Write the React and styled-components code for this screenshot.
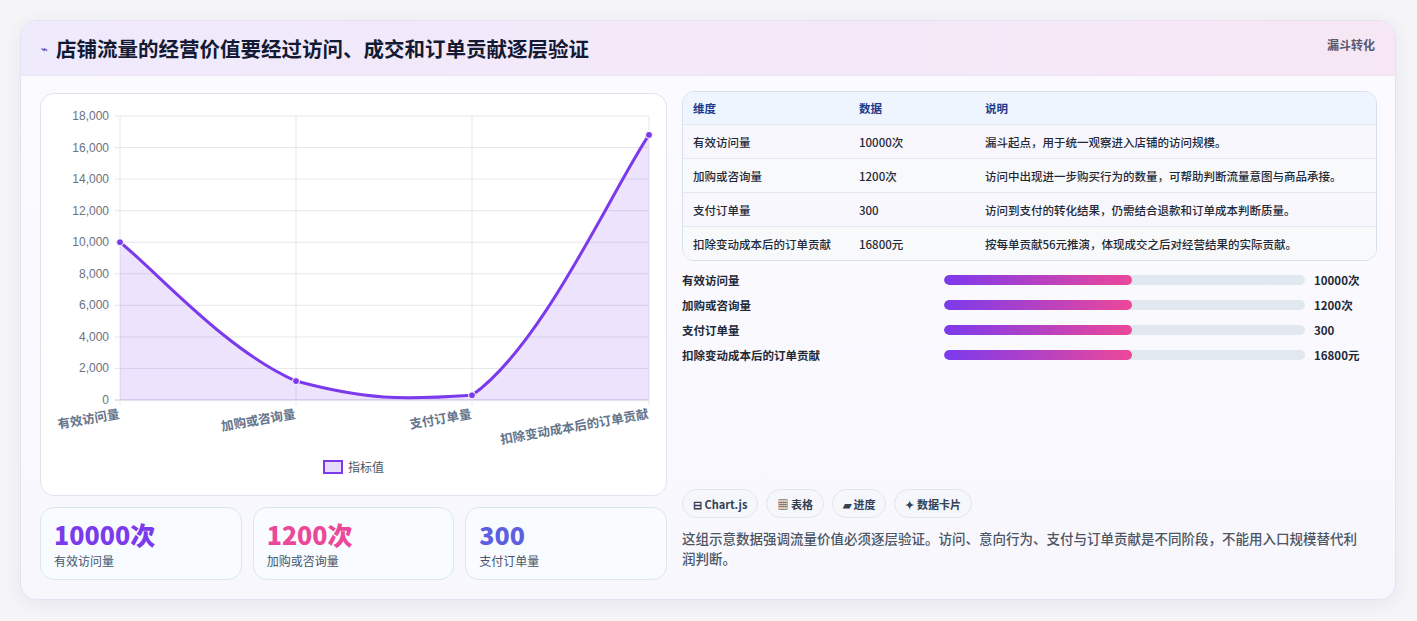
import React from "react";
import styled, { createGlobalStyle } from "styled-components";

const Global = createGlobalStyle`
  body { margin: 0; background: #f5f5f8; font-family: "Noto Sans CJK SC", "Noto Sans", sans-serif; }
`;
const Page = styled.div`padding: 20px 20px 20px 20px; height: 621px; box-sizing: border-box;`;
const Card = styled.div`
  width: 1376px; height: 580px; box-sizing: border-box;
  border: 1px solid #e4e2f2; border-radius: 16px; overflow: hidden;
  box-shadow: 0 4px 16px rgba(60,60,120,0.08);
  background: linear-gradient(180deg, #fbfbff 0%, #f8f7fd 100%);
`;
const Header = styled.div`
  height: 54px; display: flex; align-items: center; justify-content: space-between;
  padding: 0 20px; background: linear-gradient(90deg, #efeafc 0%, #f7e7f5 100%);
  border-bottom: 1px solid #ebe6f5; position: relative;
`;
const Title = styled.h1`margin: 0; font-size: 20.5px; font-weight: 700; color: #141a33; display: flex; align-items: center; gap: 8px;`;
const Tag = styled.span`position: absolute; right: 20px; top: 15px; font-size: 12px; font-weight: 700; color: #5a5a72;`;
const Body = styled.div`display: flex; gap: 15px; padding: 17px 18px 0 19px;`;
const Left = styled.div`width: 627px; display: flex; flex-direction: column; gap: 11px;`;
const ChartCard = styled.div`height: 403px; background: #fff; border: 1px solid #e0e4ef; border-radius: 14px; box-sizing: border-box; overflow: hidden;`;
const Stats = styled.div`display: grid; grid-template-columns: repeat(3, 1fr); gap: 11px;`;
const Stat = styled.div`height: 73px; box-sizing: border-box; border: 1px solid #dbe6f3; border-radius: 14px; background: #f8fbff; padding: 10px 13px;`;
const StatNum = styled.div`font-size: 25px; font-weight: 800; color: ${p => p.c}; line-height: 32px;`;
const StatLbl = styled.div`font-size: 12px; color: #475569; margin-top: 2px;`;
const Right = styled.div`flex: 1; display: flex; flex-direction: column; margin-top: -2px;`;
const Table = styled.div`border: 1px solid #d8e0ee; border-radius: 12px; overflow: hidden; background: #fafbff;`;
const Row = styled.div`
  display: grid; grid-template-columns: 166px 126px 1fr; height: ${p => p.h ? "32px" : "34px"}; box-sizing: border-box;
  align-items: center; padding-left: 10px; font-size: 11.5px; font-weight: ${p => p.h ? 700 : 500};
  color: ${p => p.h ? "#1e3a8a" : "#1f2937"}; background: ${p => p.h ? "#eef5ff" : p.alt ? "#f8f9fb" : "#f8f7fd"};
  border-top: ${p => p.first ? "none" : "1px solid #e3e7ef"};
`;
const Bars = styled.div`display: flex; flex-direction: column; gap: 7px; margin-top: 10px;`;
const BarRow = styled.div`display: grid; grid-template-columns: 262px 370px 1fr; align-items: center; height: 18px; font-size: 11.5px; font-weight: 600; color: #1f2937;`;
const Track = styled.div`height: 10px; border-radius: 5px; background: #e2e8f0; overflow: hidden; margin-right: 9px;`;
const Fill = styled.div`height: 100%; width: 52%; border-radius: 5px; background: linear-gradient(90deg, #7c3aed, #ec4899);`;
const Chips = styled.div`display: flex; gap: 8px; margin-top: 125px;`;
const Chip = styled.span`height: 29px; box-sizing: border-box; padding: 0 10px; border: 1px solid #e2e5ec; border-radius: 15px; background: #f6f7fa; font-size: 11px; font-weight: 700; color: #334155; display: flex; align-items: center; gap: 3px;`;
const Note = styled.p`margin: 10px 0 0; font-size: 13.5px; line-height: 20px; color: #4b5563; font-weight: 500; padding-right: 10px;`;

const vals = [10000, 1200, 300, 16800];
const xs = [79, 255, 431, 608];
const Y = v => 306 - (v / 18000) * 284;
const pts = vals.map((v, i) => [xs[i], Y(v)]);
function curve() {
  let d = `M${pts[0][0]},${pts[0][1]}`;
  for (let i = 0; i < 3; i++) {
    const p0 = pts[i - 1] || pts[i], p1 = pts[i], p2 = pts[i + 1], p3 = pts[i + 2] || p2;
    const t = 0.2;
    const c1 = [p1[0] + (p2[0] - p0[0]) * t, p1[1] + (p2[1] - p0[1]) * t];
    const c2 = [p2[0] - (p3[0] - p1[0]) * t, p2[1] - (p3[1] - p1[1]) * t];
    d += ` C${c1[0]},${Math.min(c1[1], 306)} ${c2[0]},${Math.min(c2[1], 306)} ${p2[0]},${p2[1]}`;
  }
  return d;
}
const labels = ["有效访问量", "加购或咨询量", "支付订单量", "扣除变动成本后的订单贡献"];

function Chart() {
  const d = curve();
  const ticks = [0, 2000, 4000, 6000, 8000, 10000, 12000, 14000, 16000, 18000];
  return (
    <svg width="627" height="403" style={{ display: "block" }}>
      {ticks.map(t => (
        <g key={t}>
          <line x1="74" x2="608" y1={Y(t)} y2={Y(t)} stroke={t === 0 ? "#c9c3e0" : "#e5e7eb"} />
          <text x="68" y={Y(t) + 4} textAnchor="end" fontSize="12" fill="#6b7280" fontFamily="Liberation Sans, sans-serif">{t.toLocaleString("en-US")}</text>
        </g>
      ))}
      {xs.map(x => <line key={x} x1={x} x2={x} y1="22" y2="311" stroke="#e5e7eb" />)}
      <path d={`${d} L608,306 L79,306 Z`} fill="rgba(124,58,237,0.14)" />
      <path d={d} fill="none" stroke="#7c3aed" strokeWidth="3" />
      {pts.map((p, i) => <circle key={i} cx={p[0]} cy={p[1]} r="3.5" fill="#7c3aed" stroke="#fff" strokeWidth="1" />)}
      {labels.map((l, i) => (
        <text key={l} x={xs[i]} y="324" textAnchor="end" fontSize="12.5" fontWeight="700" fill="#64748b" transform={`rotate(-10 ${xs[i]} 324)`}>{l}</text>
      ))}
      <rect x="283" y="367" width="18" height="12" fill="rgba(124,58,237,0.18)" stroke="#7c3aed" strokeWidth="2" />
      <text x="307" y="378" fontSize="12" fill="#4b5563">指标值</text>
    </svg>
  );
}

const rows = [
  ["有效访问量", "10000次", "漏斗起点，用于统一观察进入店铺的访问规模。"],
  ["加购或咨询量", "1200次", "访问中出现进一步购买行为的数量，可帮助判断流量意图与商品承接。"],
  ["支付订单量", "300", "访问到支付的转化结果，仍需结合退款和订单成本判断质量。"],
  ["扣除变动成本后的订单贡献", "16800元", "按每单贡献56元推演，体现成交之后对经营结果的实际贡献。"],
];

export default function App() {
  return (
    <Page>
      <Global />
      <Card>
        <Header>
          <Title><span style={{ fontSize: 11, color: "#6d5bd0" }}>⌁</span>店铺流量的经营价值要经过访问、成交和订单贡献逐层验证</Title>
          <Tag>漏斗转化</Tag>
        </Header>
        <Body>
          <Left>
            <ChartCard><Chart /></ChartCard>
            <Stats>
              <Stat><StatNum c="#7c3aed">10000次</StatNum><StatLbl>有效访问量</StatLbl></Stat>
              <Stat><StatNum c="#ec4899">1200次</StatNum><StatLbl>加购或咨询量</StatLbl></Stat>
              <Stat><StatNum c="#5b5fe0">300</StatNum><StatLbl>支付订单量</StatLbl></Stat>
            </Stats>
          </Left>
          <Right>
            <Table>
              <Row h first><span>维度</span><span>数据</span><span>说明</span></Row>
              {rows.map((r, i) => <Row key={i} alt={i % 2 === 1}><span>{r[0]}</span><span>{r[1]}</span><span>{r[2]}</span></Row>)}
            </Table>
            <Bars>
              {rows.map(r => <BarRow key={r[0]}><span>{r[0]}</span><Track><Fill /></Track><span>{r[1]}</span></BarRow>)}
            </Bars>
            <Chips>
              <Chip>⊟ Chart.js</Chip><Chip>▦ 表格</Chip><Chip>▰ 进度</Chip><Chip>✦ 数据卡片</Chip>
            </Chips>
            <Note>这组示意数据强调流量价值必须逐层验证。访问、意向行为、支付与订单贡献是不同阶段，不能用入口规模替代利润判断。</Note>
          </Right>
        </Body>
      </Card>
    </Page>
  );
}
